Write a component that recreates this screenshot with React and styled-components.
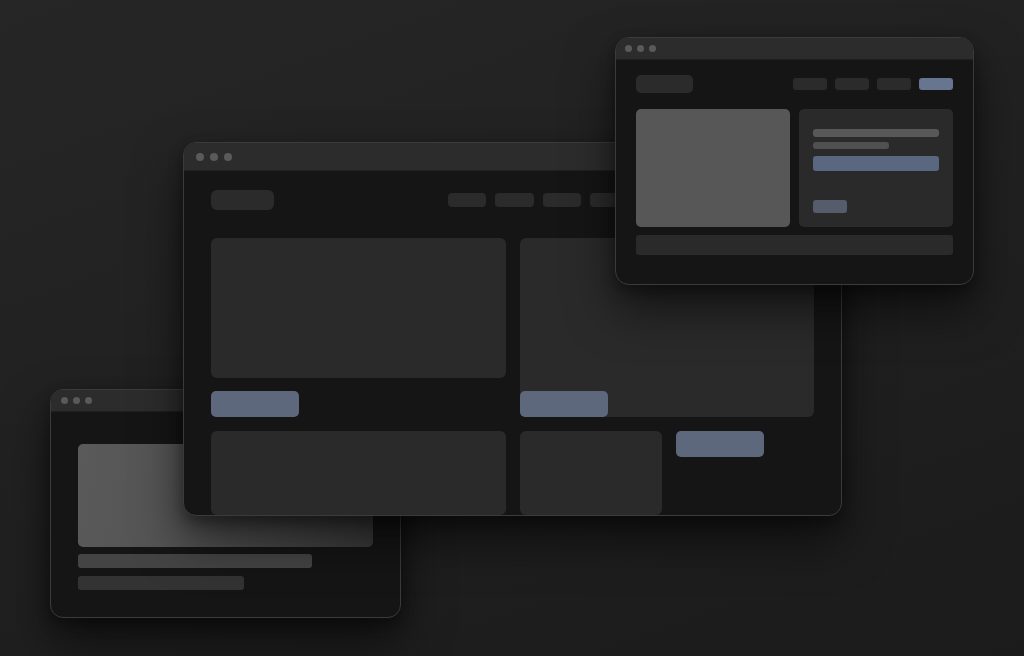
import React from "react";
import styled, { createGlobalStyle } from "styled-components";

const GlobalStyle = createGlobalStyle`
  html, body {
    margin: 0;
    padding: 0;
    background: #1d1d1d;
    font-family: "Inter", "Liberation Sans", sans-serif;
  }
`;

const Desktop = styled.div`
  position: relative;
  width: 1024px;
  height: 656px;
  overflow: hidden;
  background: linear-gradient(160deg, #262626 0%, #212121 45%, #1b1b1b 100%);
`;

const Window = styled.div`
  position: absolute;
  left: ${(p) => p.x}px;
  top: ${(p) => p.y}px;
  width: ${(p) => p.w}px;
  height: ${(p) => p.h}px;
  z-index: ${(p) => p.z};
  display: flex;
  flex-direction: column;
  box-sizing: border-box;
  background: #151515;
  border: 1px solid #3b3b3b;
  border-radius: ${(p) => p.radius || 13}px;
  overflow: hidden;
  box-shadow: 0 24px 48px rgba(0, 0, 0, 0.55), 0 6px 14px rgba(0, 0, 0, 0.35);
`;

const TitleBar = styled.div`
  flex: none;
  height: ${(p) => p.h}px;
  display: flex;
  align-items: center;
  gap: ${(p) => p.gap}px;
  padding-left: ${(p) => p.pad}px;
  background: #2c2c2c;
  border-bottom: 1px solid #1f1f1f;
  box-sizing: border-box;
`;

const Dot = styled.span`
  width: ${(p) => p.size}px;
  height: ${(p) => p.size}px;
  border-radius: 50%;
  background: #5a5a5a;
`;

const Body = styled.div`
  flex: 1;
  display: flex;
  flex-direction: column;
  padding: ${(p) => p.pad};
  gap: ${(p) => p.gap}px;
  min-height: 0;
`;

const Header = styled.div`
  display: flex;
  align-items: center;
  justify-content: ${(p) => (p.spread ? "space-between" : "flex-start")};
  height: ${(p) => p.h}px;
  flex: none;
`;

const Pill = styled.div`
  width: ${(p) => p.w}px;
  height: ${(p) => p.h}px;
  border-radius: ${(p) => p.r || 4}px;
  background: ${(p) => (p.blue ? "#687590" : "#2b2b2b")};
  flex: none;
`;

const Nav = styled.div`
  display: flex;
  gap: ${(p) => p.gap}px;
  margin-left: ${(p) => p.offset || 0}px;
`;

const MainGrid = styled.div`
  flex: 1;
  display: grid;
  grid-template-columns: 295px 294px;
  gap: 14px;
  min-height: 0;
`;

const Column = styled.div`
  display: flex;
  flex-direction: column;
`;

const Card = styled.div`
  background: #2a2a2a;
  border-radius: 6px;
  height: ${(p) => (p.h ? `${p.h}px` : "auto")};
  width: ${(p) => (p.w ? `${p.w}px` : "auto")};
  flex: ${(p) => (p.grow ? 1 : "none")};
  align-self: ${(p) => (p.stretch ? "stretch" : "auto")};
  margin-top: ${(p) => p.mt || 0}px;
  display: flex;
  flex-direction: column;
  justify-content: flex-end;
`;

const Button = styled.div`
  width: ${(p) => p.w}px;
  height: ${(p) => p.h}px;
  margin-top: ${(p) => p.mt || 0}px;
  border-radius: 5px;
  background: #5e687c;
  flex: none;
`;

const Row = styled.div`
  display: flex;
  gap: ${(p) => p.gap}px;
  margin-top: ${(p) => p.mt || 0}px;
  flex: ${(p) => (p.grow ? 1 : "none")};
  align-items: flex-start;
`;

const Image = styled.div`
  width: ${(p) => p.w}px;
  height: ${(p) => p.h}px;
  border-radius: 5px;
  background: ${(p) =>
    p.fade
      ? "linear-gradient(100deg, #5a5a5a 0%, #505050 50%, #3a3a3a 100%)"
      : "#575757"};
  flex: none;
`;

const Panel = styled.div`
  width: ${(p) => p.w}px;
  height: ${(p) => p.h}px;
  box-sizing: border-box;
  padding: 20px 14px;
  border-radius: 5px;
  background: #2a2a2a;
  display: flex;
  flex-direction: column;
`;

const Line = styled.div`
  width: ${(p) => p.w}px;
  height: ${(p) => p.h}px;
  margin-top: ${(p) => p.mt || 0}px;
  border-radius: 3px;
  background: ${(p) => p.color};
  flex: none;
`;

function Dots({ size, gap, pad, h }) {
  return (
    <TitleBar h={h} gap={gap} pad={pad}>
      <Dot size={size} />
      <Dot size={size} />
      <Dot size={size} />
    </TitleBar>
  );
}

export default function App() {
  return (
    <>
      <GlobalStyle />
      <Desktop>
        {/* back window, bottom left */}
        <Window x={50} y={389} w={351} h={229} z={1}>
          <Dots h={22} size={7} gap={5} pad={10} />
          <Body pad="32px 27px 0 27px" gap={0}>
            <Image w={295} h={103} fade />
            <Line w={234} h={14} mt={7} color="#444" />
            <Line w={166} h={14} mt={8} color="#333" />
          </Body>
        </Window>

        {/* main window */}
        <Window x={183} y={142} w={659} h={374} z={2}>
          <Dots h={28} size={8} gap={6} pad={12} />
          <Body pad="19px 0 0 27px" gap={28}>
            <Header h={20}>
              <Pill w={63} h={20} r={6} />
              <Nav gap={9} offset={174}>
                <Pill w={38} h={14} />
                <Pill w={39} h={14} />
                <Pill w={38} h={14} />
                <Pill w={38} h={14} />
                <Pill w={38} h={14} />
              </Nav>
            </Header>
            <MainGrid>
              <Column>
                <Card h={140} />
                <Button w={88} h={26} mt={13} />
                <Card grow mt={14} />
              </Column>
              <Column>
                <Card h={179}>
                  <Button w={88} h={26} />
                </Card>
                <Row gap={14} mt={14} grow>
                  <Card w={142} stretch />
                  <Button w={88} h={26} />
                </Row>
              </Column>
            </MainGrid>
          </Body>
        </Window>

        {/* front window, top right */}
        <Window x={615} y={37} w={359} h={248} z={3} radius={14}>
          <Dots h={22} size={7} gap={5} pad={9} />
          <Body pad="15px 20px 0 20px" gap={0}>
            <Header h={18} spread>
              <Pill w={57} h={18} r={5} />
              <Nav gap={8}>
                <Pill w={34} h={12} r={3} />
                <Pill w={34} h={12} r={3} />
                <Pill w={34} h={12} r={3} />
                <Pill w={34} h={12} r={3} blue />
              </Nav>
            </Header>
            <Row gap={9} mt={16}>
              <Image w={154} h={118} />
              <Panel w={154} h={118}>
                <Line w={126} h={8} color="#585858" />
                <Line w={76} h={7} mt={5} color="#505050" />
                <Line w={126} h={15} mt={7} color="#5a6780" />
                <Line w={34} h={13} mt={29} color="#555d6d" />
              </Panel>
            </Row>
            <Line w={317} h={20} mt={8} color="#2a2a2a" />
          </Body>
        </Window>
      </Desktop>
    </>
  );
}
